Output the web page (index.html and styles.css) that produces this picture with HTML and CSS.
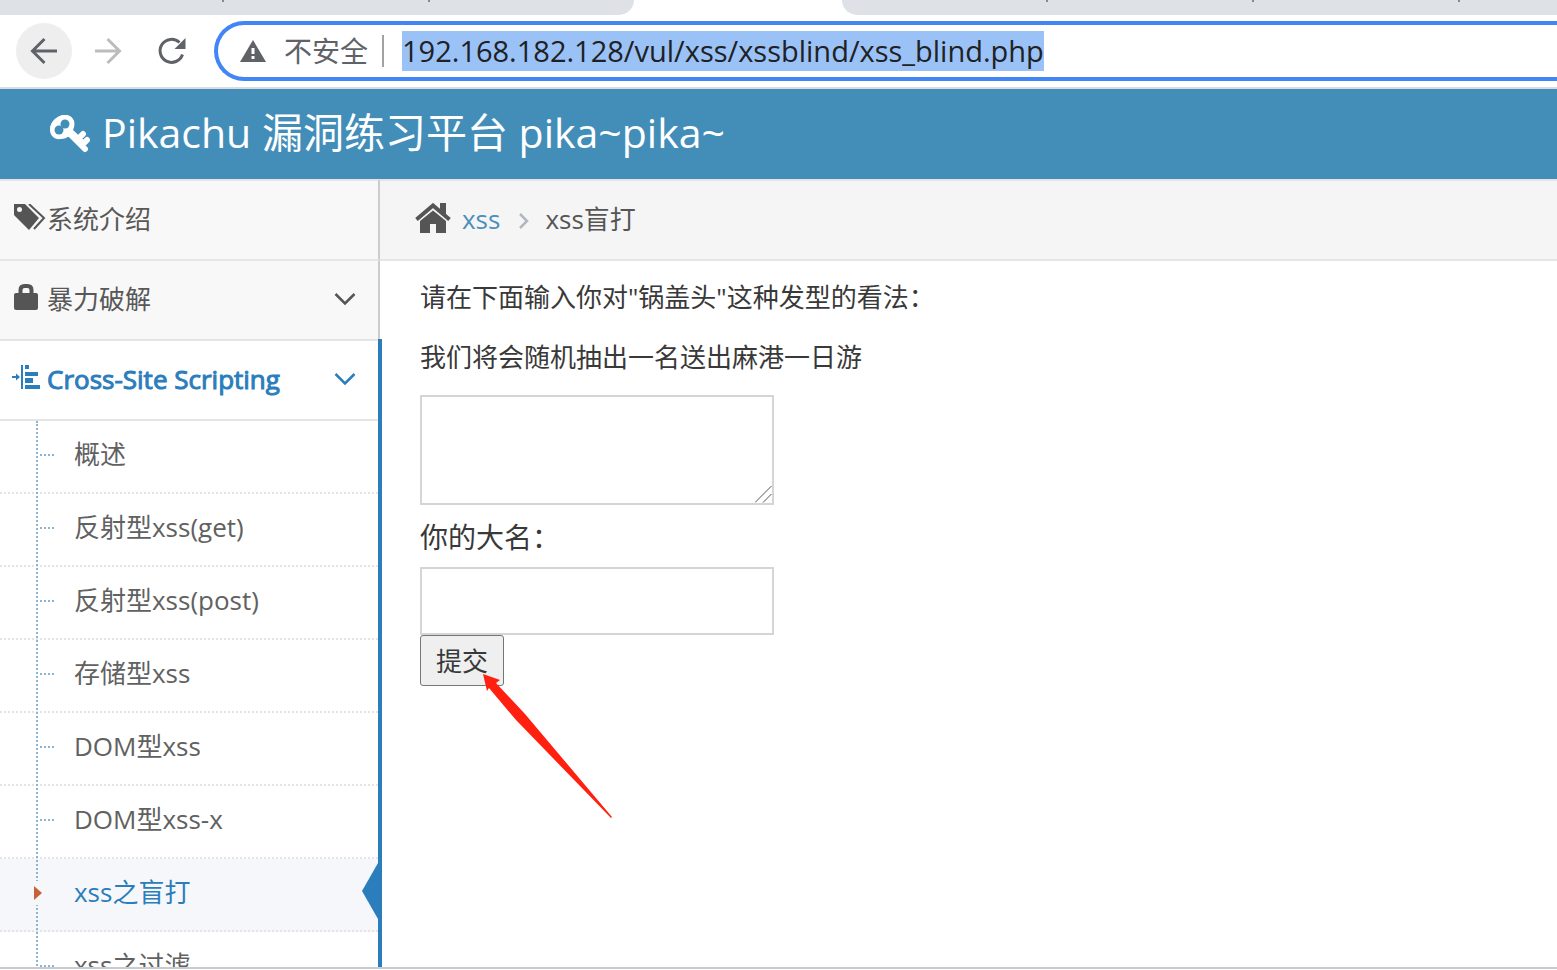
FILE: index.html
```html
<!DOCTYPE html>
<html lang="zh-CN">
<head>
<meta charset="utf-8">
<title>Pikachu</title>
<link rel="stylesheet" href="styles.css">
</head>
<body>
<div class="window">
  <div class="tabs">
    <div class="tabs-left"><div class="tab tab-first"></div><div class="tab"></div></div>
    <div class="tabs-right"><div class="tab"></div><div class="tab"></div><div class="tab"></div></div>
  </div>
  <div class="toolbar">
    <button class="nav-btn nav-back" type="button" aria-label="后退">
      <svg width="28" height="28" viewBox="0 0 28 28" fill="none" stroke="#5f6368" stroke-width="3"><path d="M27 14H3M14.500 2L2.500 14l12 12"/></svg>
    </button>
    <button class="nav-btn" type="button" aria-label="前进">
      <svg width="28" height="28" viewBox="0 0 28 28" fill="none" stroke="#babcbe" stroke-width="3"><path d="M1 14h24M13.500 2l12 12-12 12"/></svg>
    </button>
    <button class="nav-btn nav-reload" type="button" aria-label="刷新">
      <svg width="30" height="30" viewBox="0 0 30 30"><path d="M25.500 18.500A11.500 11.500 0 1 1 22.500 6.500" fill="none" stroke="#5f6368" stroke-width="3"/><path d="M28.500 2v11h-11z" fill="#5f6368"/></svg>
    </button>
    <div class="omnibox">
      <svg class="warn" width="26" height="22" viewBox="0 0 26 22"><path d="M13 0l13 22H0z" fill="#5f6368"/><path d="M11.500 8h3v6h-3zM11.500 16h3v3h-3z" fill="#fff"/></svg>
      <span class="insecure">不安全</span>
      <span class="divider"></span>
      <input class="url" type="text" aria-label="地址" value="192.168.182.128/vul/xss/xssblind/xss_blind.php">
    </div>
  </div>
  <header class="banner">
    <svg width="40" height="38" viewBox="0 0 40 38"><path d="M0 15C0 7 7 0 15 0c7 0 11 6 9 12l-1 3 15 14" fill="#fff"/><path d="M0 15C0 7 7 0 15 0c7 0 11 6 8 14-2 6-6 10-12 10-6 1-11-3-11-9z" fill="#fff"/><path d="M18 17l17 17M27 25l6-6M32 30l5-5" fill="none" stroke="#fff" stroke-width="6" stroke-linecap="round"/><circle cx="15" cy="9" r="4.500" fill="#438eb9"/><circle cx="9" cy="15" r="4.500" fill="#438eb9"/></svg>
    <h1 class="title">Pikachu 漏洞练习平台 pika~pika~</h1>
  </header>
  <div class="page">
    <nav class="sidebar">
      <a class="item" href="#">
        <svg class="item-icon" width="32" height="26" viewBox="0 0 32 26"><path fill-rule="evenodd" d="M0 0h11l14 14-10 12L0 11zM5.500 3a2.500 2.500 0 1 0 0 5 2.500 2.500 0 0 0 0-5z" fill="#555"/><path d="M15 0l15 14-10 11" fill="none" stroke="#555" stroke-width="2"/></svg>
        <span class="item-text">系统介绍</span>
      </a>
      <a class="item" href="#">
        <svg class="item-icon" width="32" height="26" viewBox="0 0 32 26"><path d="M6.500 11V6q0-4 4-4h3q4 0 4 4v5" fill="none" stroke="#555" stroke-width="4"/><rect y="9" width="24" height="17" rx="2" fill="#555"/></svg>
        <span class="item-text">暴力破解</span>
        <svg class="chev" width="22" height="14" viewBox="0 0 22 14"><path d="M1.500 2L11 11.500 20.500 2" fill="none" stroke="#555" stroke-width="2.500"/></svg>
      </a>
      <div class="group">
        <a class="item item-open" href="#">
          <svg class="item-icon item-icon-wide" width="34" height="26" viewBox="0 0 34 26"><path d="M0 12h4V9.500L8 13l-4 3.500V14H0zM9 1h2v24H9zM13 1h4v4h-4zM13 8h13v4H13zM13 14h8v5h-8zM13 21h15v4H13z" fill="#2b7dbc"/></svg>
          <span class="item-text">Cross-Site Scripting</span>
          <svg class="chev" width="22" height="14" viewBox="0 0 22 14"><path d="M1.500 2L11 11.500 20.500 2" fill="none" stroke="#2b7dbc" stroke-width="2.500"/></svg>
        </a>
        <div class="submenu">
          <a class="sub" href="#">概述</a>
          <a class="sub" href="#">反射型xss(get)</a>
          <a class="sub" href="#">反射型xss(post)</a>
          <a class="sub" href="#">存储型xss</a>
          <a class="sub" href="#">DOM型xss</a>
          <a class="sub" href="#">DOM型xss-x</a>
          <a class="sub sub-active" href="#">xss之盲打
            <svg class="caret" width="14" height="24" viewBox="0 0 14 24"><path d="M0 0h14v24H0z" fill="#f5f7fa"/><path d="M4 5l8 7-8 7z" fill="#c86139"/></svg>
            <svg class="notch" width="16" height="56" viewBox="0 0 16 56"><path d="M16 0v56L0 28z" fill="#2b7dbc"/></svg>
          </a>
          <a class="sub" href="#">xss之过滤</a>
        </div>
      </div>
    </nav>
    <main class="main">
      <div class="crumbs">
        <svg class="home" width="36" height="30" viewBox="0 0 36 30" fill="#555"><path d="M1.500 16.500L18 2.500l16.500 14" fill="none" stroke="#555" stroke-width="4"/><path d="M25 0h6v14l-6-5zM18 7.500L31 18v12H21v-9h-6v9H5V18z"/></svg>
        <a class="crumb-link" href="#">xss</a>
        <svg class="crumb-sep" width="10" height="18" viewBox="0 0 10 18"><path d="M1 2l7 7-7 7" fill="none" stroke="#b2b6bf" stroke-width="2.500"/></svg>
        <span>xss盲打</span>
      </div>
      <form class="form">
        <label class="line" for="opinion">请在下面输入你对"锅盖头"这种发型的看法：</label>
        <p class="line">我们将会随机抽出一名送出麻港一日游</p>
        <div class="area-wrap">
          <textarea class="field area" id="opinion"></textarea>
          <svg class="grip" width="17" height="17" viewBox="0 0 17 17"><path d="M0 16.500L16.500 0M8 16.500L16.500 8" fill="none" stroke="#555"/></svg>
        </div>
        <label class="name-label" for="name">你的大名：</label>
        <input class="field name" id="name" type="text">
        <div class="submit-wrap">
          <button class="submit" type="button">提交</button>
          <svg class="arrow" width="130" height="144" viewBox="0 0 130 144"><path d="M0 0l17 6-4 3 29 31 87 103-1 1L33 46 6 14l-2 3z" fill="#ff2010"/></svg>
        </div>
      </form>
    </main>
  </div>
</div>
</body>
</html>
```
FILE: styles.css
```css
* { box-sizing: border-box; }
body {
  margin: 0;
  background: #fff;
  color: #393939;
  font: 26px/40px "Open Sans", "Noto Sans CJK SC", sans-serif;
}
a { color: inherit; text-decoration: none; }
svg { display: block; flex: none; }
.window { display: flex; flex-direction: column; height: 100vh; padding-bottom: 1px; overflow: hidden; }

.tabs { display: flex; flex: none; gap: 208px; height: 15px; }
.tabs-left, .tabs-right { display: flex; background: #dee1e6; }
.tabs-left { flex: none; width: 634px; border-bottom-right-radius: 16px; }
.tabs-right { flex: 1; min-width: 0; border-bottom-left-radius: 16px; }
.tab { display: flex; flex: none; justify-content: flex-end; width: 206px; }
.tab::after { content: ""; width: 2px; height: 2px; background: #85888d; }
.tab-first { width: 224px; }

.toolbar { display: flex; flex: none; align-items: center; height: 74px; padding-left: 16px; border-bottom: 2px solid #dadce0; }
.nav-btn { display: flex; align-items: center; justify-content: center; flex: none; width: 56px; height: 56px; margin-right: 8px; padding: 0; border: 0; border-radius: 50%; background: none; }
.nav-back { background: #eee; }
.nav-reload { margin-right: 14px; }
.omnibox { display: flex; flex: 1; align-items: center; min-width: 0; height: 60px; padding-left: 22px; border: 4px solid #4285f4; border-right: 0; border-radius: 30px 0 0 30px; }
.insecure { margin-left: 18px; color: #5f6368; font-size: 28px; }
.divider { width: 2px; height: 32px; margin: 0 18px 0 14px; background: #a0a2a5; }
.url { field-sizing: content; height: 40px; padding: 0 0 2px; border: 0; outline: 0; background: #9bc2f6; color: #202124; font: 29px/38px "Open Sans", sans-serif; }

.banner { display: flex; flex: none; align-items: center; gap: 12px; height: 90px; padding: 0 50px; background: #438eb9; color: #fff; }
.title { margin: 0; padding-bottom: 4px; font-size: 41px; font-weight: 400; line-height: 60px; white-space: nowrap; }

.page { display: flex; flex: 1; min-height: 0; border-bottom: 2px solid #c8ccd0; overflow: hidden; }
.sidebar { flex: none; width: 382px; color: #585858; }
.item { display: flex; align-items: center; width: 380px; height: 80px; padding: 0 22px 2px 14px; border-right: 2px solid #ccc; border-bottom: 2px solid #e5e5e5; background: #f8f8f8; }
.item-icon { margin: 0 1px 4px 0; }
.item-text { flex: 1; white-space: nowrap; }
.sidebar > .item:first-child { height: 82px; border-top: 2px solid #e5e5e5; }
.group { position: relative; margin-top: -2px; border-right: 4px solid #2b7dbc; }
.item-open { width: 378px; height: 82px; padding-left: 12px; border-top: 2px solid #e5e5e5; border-right: 0; background: #fff; color: #2b7dbc; }
.item-open .item-text { -webkit-text-stroke: 1px #2b7dbc; }
.submenu { position: relative; }
.submenu::before { content: ""; position: absolute; top: 0; left: 36px; z-index: 1; height: 545px; border-left: 2px dotted #8fb4d1; }
.sub { position: relative; display: block; height: 73px; padding: 13px 0 0 74px; border-bottom: 2px dotted #e4e4e4; color: #616161; }
.sub::before { content: ""; position: absolute; top: 33px; left: 40px; width: 14px; border-top: 2px dotted #8fb4d1; }
.sub-active { background: #f5f7fa; color: #2b7dbc; }
.sub-active::before { display: none; }
.caret { position: absolute; top: 22px; left: 30px; z-index: 2; }
.notch { position: absolute; top: 4px; right: 0; }

.main { flex: 1; min-width: 0; }
.crumbs { display: flex; align-items: center; height: 82px; margin-left: -2px; padding: 0 0 2px 35px; border-top: 2px solid #e5e5e5; border-bottom: 2px solid #e5e5e5; background: #f5f5f5; color: #555; }
.home { margin-bottom: 2px; }
.crumb-link { margin-left: 11px; color: #4c8fbd; }
.crumb-sep { margin: 4px 16px 0 19px; }
.form { padding: 16px 38px; }
.line { display: block; margin: 0 0 20px; }
.area-wrap { position: relative; width: 354px; margin-top: -2px; }
.field { display: block; width: 354px; margin: 0; padding: 8px; border: 2px solid #d5d5d5; border-radius: 0; background: #fff; font: inherit; }
.area { height: 110px; resize: none; }
.grip { position: absolute; right: 2px; bottom: 2px; }
.name-label { display: block; margin: 12px 0 10px; font-size: 28px; }
.name { height: 68px; }
.submit-wrap { position: relative; width: 84px; }
.submit { display: block; width: 84px; height: 51px; padding: 0; border: 1px solid #767676; border-radius: 3px; background: #efefef; color: #393939; font: inherit; }
.arrow { position: absolute; top: 39px; left: 63px; }
```
